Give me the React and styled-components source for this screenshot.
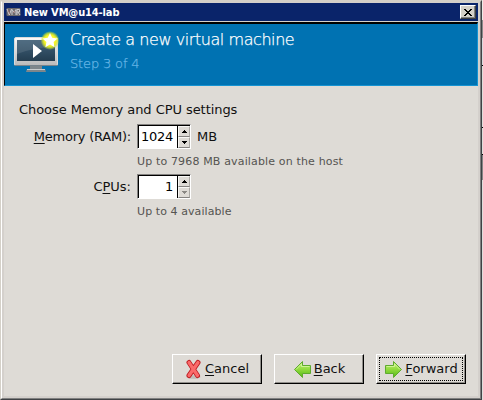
import React from "react";
import styled, { createGlobalStyle } from "styled-components";

const GlobalStyle = createGlobalStyle`
  * { box-sizing: border-box; }
  html, body { margin: 0; overflow: hidden; }
`;

const Desktop = styled.div`
  display: flex;
  width: 483px;
  height: 400px;
  font-family: "DejaVu Sans", sans-serif;
  font-size: 13px;
  color: #111;
  white-space: nowrap;
`;

const Window = styled.main`
  display: flex;
  width: 482px;
  height: 400px;
  border: 1px solid;
  border-color: #d4d0c8 #404245 #404245 #d4d0c8;
`;

const Frame = styled.div`
  display: flex;
  flex-direction: column;
  flex: 1;
  min-width: 0;
  padding: 1px 2px 2px;
  background: #d4d0cc;
  border: 1px solid;
  border-color: #d4d0c8 #808080 #808080 #fff;
`;

const TitleBar = styled.header`
  display: flex;
  align-items: center;
  height: 18px;
  padding: 0 2px;
  gap: 3px;
  background: #0a246a;
  color: #fff;
`;

const WindowTitle = styled.h1`
  flex: 1;
  margin: 0;
  padding-top: 1px;
  font: bold 11px/16px "DejaVu Sans Condensed", "DejaVu Sans", sans-serif;
  font-stretch: condensed;
  letter-spacing: -0.12px;
`;

const CloseButton = styled.button`
  display: flex;
  align-items: center;
  justify-content: center;
  width: 16px;
  height: 14px;
  padding: 0;
  background: #d4d0c8;
  border: 1px solid;
  border-color: #fff #404040 #404040 #fff;
  box-shadow: inset -1px -1px #808080;
`;

const Banner = styled.section`
  display: flex;
  height: 64px;
  margin-top: 1px;
  padding-left: 4px;
  gap: 9px;
  background: #0072b2;
  border-style: solid;
  border-width: 2px 1px 1px;
  border-color: #000 #1593d2 #1593d2 #000;
`;

const BannerText = styled.div`
  padding-top: 4px;
`;

const Heading = styled.h2`
  margin: 0;
  font-weight: 200;
  font-size: 16px;
  line-height: 24px;
  color: #fff;
  letter-spacing: -0.43px;
  -webkit-text-stroke: 0.25px #fff;
`;

const Step = styled.div`
  font-weight: 200;
  font-size: 13px;
  line-height: 24px;
  color: #66b5e5;
  letter-spacing: -0.15px;
  -webkit-text-stroke: 0.25px #66b5e5;
`;

const Body = styled.section`
  display: flex;
  flex-direction: column;
  flex: 1;
  padding: 15px 12px 12px 15px;
  background: #dedbd6;
`;

const Caption = styled.div`
  height: 18px;
  line-height: 18px;
  letter-spacing: -0.06px;
`;

const Settings = styled.div`
  display: grid;
  grid-template-columns: 112px auto;
  column-gap: 6px;
  grid-template-rows: 25px 25px 25px 25px;
  align-items: center;
  margin-top: 5px;
`;

const Label = styled.label`
  justify-self: end;
  line-height: 20px;
  letter-spacing: ${(p) => p.$spacing};
`;

const Mnemonic = styled.span`
  text-decoration: underline;
  text-decoration-thickness: 1px;
  text-underline-offset: 2px;
  text-decoration-skip-ink: none;
`;

const FieldRow = styled.div`
  display: flex;
  align-items: center;
  gap: 6px;
`;

const Hint = styled.div`
  grid-column: 2;
  font-size: 11px;
  line-height: 20px;
  color: #555451;
  letter-spacing: ${(p) => p.$spacing};
`;

const Spin = styled.div`
  display: flex;
  width: 54px;
  height: 25px;
  background: #fff;
  border: 1px solid;
  border-color: #848280 #fff #fff #848280;
  box-shadow: inset 1px 1px #000;
`;

const Value = styled.div`
  flex: 1;
  padding-right: 4px;
  border-right: 1px solid #000;
  line-height: 23px;
  text-align: right;
  color: #000;
  letter-spacing: -0.25px;
`;

const Steppers = styled.div`
  display: flex;
  flex-direction: column;
  width: 12px;
  padding-top: 1px;
`;

const Stepper = styled.button`
  display: flex;
  flex: 1;
  align-items: center;
  justify-content: center;
  padding: 0;
  background: #dedbd6;
  border: 1px solid;
  border-color: #f8f7f5 #aaa8a4 #848280 #f8f7f5;
  color: ${(p) => (p.disabled ? "#8a8884" : "#000")};
`;

const Actions = styled.footer`
  display: flex;
  justify-content: flex-end;
  gap: 12px;
  margin-top: auto;
`;

const ActionButton = styled.button`
  display: flex;
  align-items: center;
  justify-content: center;
  width: 90px;
  height: 30px;
  padding: 0 0 1px;
  gap: ${(p) => p.$gap || "2px"};
  font: inherit;
  color: #111;
  background: #dedbd6;
  border: 1px solid;
  border-color: #fff #000 #000 #fff;
  box-shadow: inset -1px -1px #918f8b;
  outline: ${(p) => (p.$focused ? "1px dotted #000" : "none")};
  outline-offset: -4px;
`;

const Behind = styled.aside`
  display: grid;
  grid-template-rows: 20px 18px 27px 1px 61px 1px 26px 1px 25px 1fr;
  width: 1px;
`;

const Slice = styled.div`
  background: ${(p) => p.$color};
`;

function VmIcon() {
  return (
    <svg width="15" height="12" viewBox="0 0 15 12">
      <rect x="0.5" y="2" width="14" height="8" rx="1" fill="#6c6a6e" />
      <path d="M1 3l2.3 6L5.5 3M6 9V3.5l2 3 2-3V9M11 9V3.5h2.5v2.5H11M12 6l2 3" fill="none" stroke="#cfcdd0" strokeWidth="1" />
      <path d="M2 4l2 4M7 7l2-2" stroke="#9d625d" strokeWidth=".7" />
    </svg>
  );
}

function MonitorIcon() {
  return (
    <svg width="52" height="52" viewBox="9 24 52 52">
      <defs>
        <linearGradient id="screen" x2="0" y2="1"><stop stopColor="#40617a" /><stop offset="1" stopColor="#243d50" /></linearGradient>
        <linearGradient id="bezel" x2="0" y2="1"><stop stopColor="#fafafa" /><stop offset="1" stopColor="#b9b9ba" /></linearGradient>
        <radialGradient id="glow"><stop offset="0" stopColor="#ffff75" /><stop offset=".6" stopColor="#f5f321" /><stop offset=".78" stopColor="#d7e62b" stopOpacity=".75" /><stop offset="1" stopColor="#c5e030" stopOpacity="0" /></radialGradient>
      </defs>
      <rect x="14.5" y="37.5" width="43" height="28" rx="1.5" fill="url(#bezel)" stroke="#d8dadb" />
      <path d="M14.5 65.5h43" stroke="#77838b" />
      <rect x="17" y="40" width="38" height="21" fill="url(#screen)" />
      <path d="M17 40h38v7Q35 47 17 54Z" fill="#718391" opacity=".35" />
      <path d="M30 66h12v3h3l1 3H26l1-3h3Z" fill="#7e868b" />
      <path d="M27 69.5h18" stroke="#c9cdcf" />
      <path d="M33 44l9 7-9 7Z" fill="#fff" />
      <circle cx="50" cy="40.500" r="9.500" fill="url(#glow)" />
      <path d="M50 33l2.200 4.800 5.300.6-3.900 3.600 1 5.200-4.600-2.600-4.600 2.600 1-5.200-3.900-3.600 5.300-.6Z" fill="#fff" />
    </svg>
  );
}

function CloseGlyph() {
  return (
    <svg width="8" height="7" viewBox="0 0 8 7" shapeRendering="crispEdges">
      <path d="M0 0h2v1h1v1h2V1h1V0h2v1H7v1H6v1H5v1h1v1h1v1h1v1H6V6H5V5H3v1H2v1H0V6h1V5h1V4h1V3H2V2H1V1H0Z" fill="#000" />
    </svg>
  );
}

function Triangle({ down }) {
  return (
    <svg width="5" height="3" viewBox="0 0 5 3" shapeRendering="crispEdges">
      <path d={down ? "M0 0h5v1H4v1H3v1H2V2H1V1H0Z" : "M2 0h1v1h1v1h1v1H0V2h1V1h1Z"} fill="currentColor" />
    </svg>
  );
}

function CancelIcon() {
  return (
    <svg width="17" height="20" viewBox="0 0 17 20">
      <ellipse cx="8.500" cy="18" rx="7" ry="1.800" fill="#aaa7a2" opacity=".6" />
      <path d="M4 3.500l8.500 13M13 3.500L4 16.500" fill="none" stroke="#bd1d22" strokeWidth="5" strokeLinecap="round" strokeLinejoin="round" />
      <path d="M4 3.500l8.500 13M13 3.500L4 16.500" fill="none" stroke="#fa6a6a" strokeWidth="3.200" strokeLinecap="round" />
    </svg>
  );
}

function ArrowIcon({ right }) {
  return (
    <svg width="19" height="20" viewBox="0 0 19 20">
      <defs><linearGradient id={right ? "arrowR" : "arrowL"} x2="0" y2="1"><stop stopColor="#caf37a" /><stop offset=".48" stopColor="#92db40" /><stop offset="1" stopColor="#55b914" /></linearGradient></defs>
      <g transform={right ? "translate(19 0) scale(-1 1)" : undefined}>
        <path d="M1.500 10.500L9.500 2.500v4h8v8h-8v4Z" fill={right ? "url(#arrowR)" : "url(#arrowL)"} stroke="#5eaa2f" />
        <path d="M3 10.500l5.500-5.500v2.500h8" fill="none" stroke="#d8f8a3" strokeWidth=".8" />
      </g>
    </svg>
  );
}

function SpinBox({ value, atMinimum }) {
  return (
    <Spin>
      <Value>{value}</Value>
      <Steppers>
        <Stepper aria-label="Increase"><Triangle /></Stepper>
        <Stepper aria-label="Decrease" disabled={atMinimum}><Triangle down /></Stepper>
      </Steppers>
    </Spin>
  );
}

export default function App() {
  return (
    <Desktop>
      <GlobalStyle />
      <Window>
        <Frame>
          <TitleBar>
            <VmIcon />
            <WindowTitle>New VM@u14-lab</WindowTitle>
            <CloseButton aria-label="Close"><CloseGlyph /></CloseButton>
          </TitleBar>
          <Banner>
            <MonitorIcon />
            <BannerText>
              <Heading>Create a new virtual machine</Heading>
              <Step>Step 3 of 4</Step>
            </BannerText>
          </Banner>
          <Body>
            <Caption>Choose Memory and CPU settings</Caption>
            <Settings>
              <Label $spacing="-0.22px"><Mnemonic>M</Mnemonic>emory (RAM):</Label>
              <FieldRow><SpinBox value="1024" /><span>MB</span></FieldRow>
              <Hint $spacing="0.15px">Up to 7968 MB available on the host</Hint>
              <Label>C<Mnemonic>P</Mnemonic>Us:</Label>
              <FieldRow><SpinBox value="1" atMinimum /></FieldRow>
              <Hint $spacing="0.08px">Up to 4 available</Hint>
            </Settings>
            <Actions>
              <ActionButton $gap="3px"><CancelIcon /><span><Mnemonic>C</Mnemonic>ancel</span></ActionButton>
              <ActionButton><ArrowIcon /><span><Mnemonic>B</Mnemonic>ack</span></ActionButton>
              <ActionButton $focused><ArrowIcon right /><span><Mnemonic>F</Mnemonic>orward</span></ActionButton>
            </Actions>
          </Body>
        </Frame>
      </Window>
      <Behind>
        {["#eceae6", "#8b8b8b", "#d8dadd", "#000", "#deddda", "#000", "#deddda", "#000", "#858585", "#dedddb"].map((c, i) => <Slice key={i} $color={c} />)}
      </Behind>
    </Desktop>
  );
}
